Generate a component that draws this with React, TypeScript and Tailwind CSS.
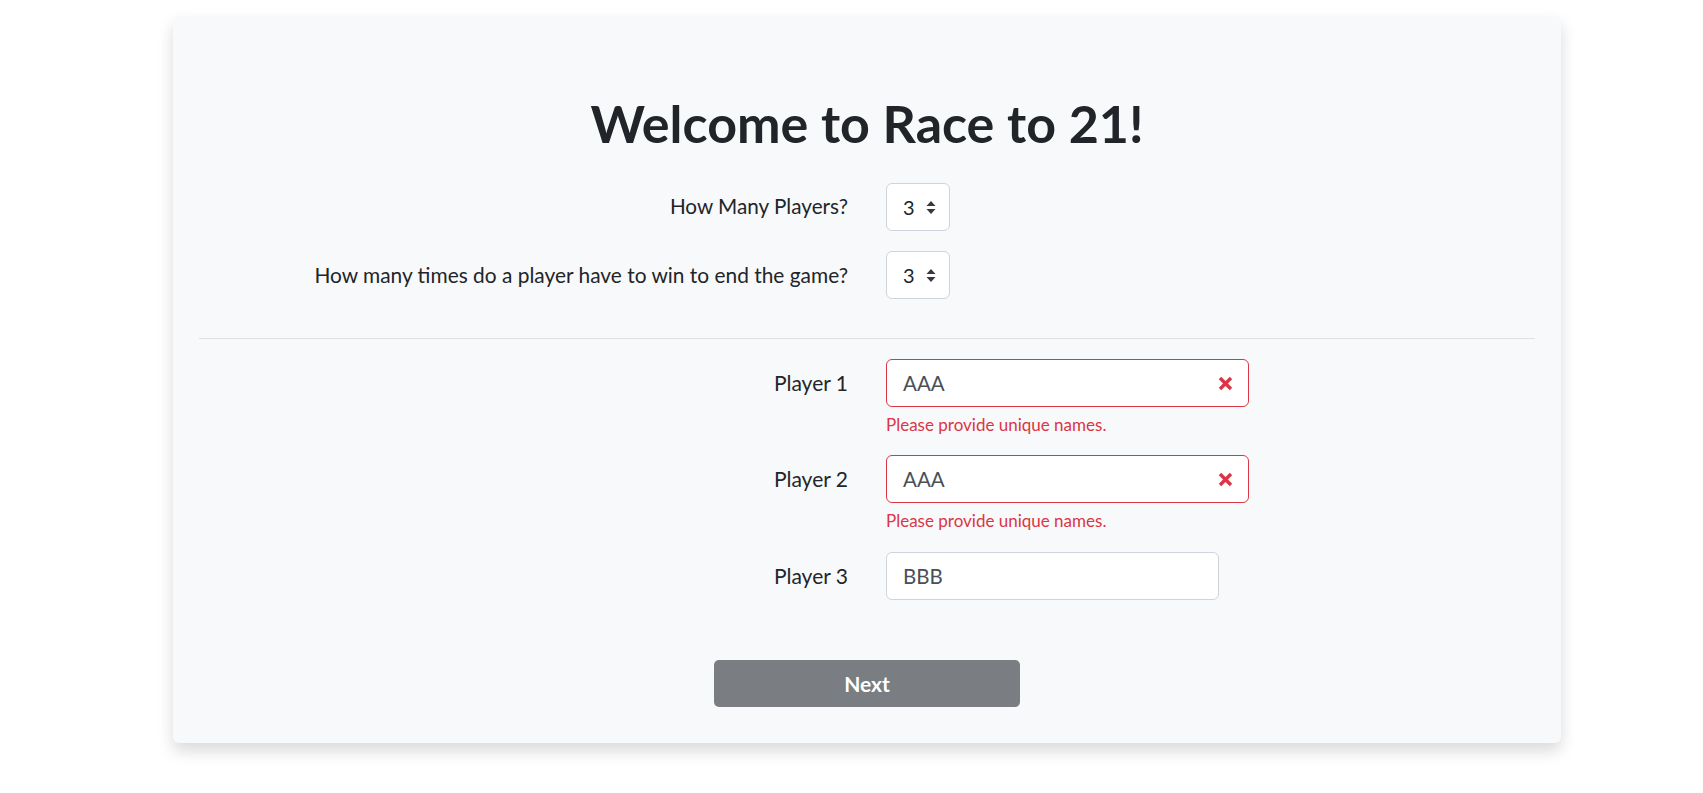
import React from "react";

const font = { fontFamily: "Lato, 'Noto Sans', sans-serif" };

function Arrows() {
  return (
    <svg width="10" height="13" viewBox="0 0 10 13" className="shrink-0">
      <path d="M5 0 L9.5 5 L0.5 5 Z" fill="#343a40" />
      <path d="M5 13 L9.5 8 L0.5 8 Z" fill="#343a40" />
    </svg>
  );
}

function XIcon() {
  return (
    <svg width="15" height="15" viewBox="0 0 15 15">
      <path d="M2 2 L13 13 M13 2 L2 13" stroke="#dc3545" strokeWidth="3.4" strokeLinecap="butt" />
    </svg>
  );
}

function SelectBox() {
  return (
    <div className="flex h-[48px] w-[64px] items-center gap-[11px] rounded-md border border-[#ced4da] bg-white pl-[16px] text-[20px] text-[#212529]">
      <span>3</span>
      <Arrows />
    </div>
  );
}

function PlayerRow({ n, value, invalid, mb }: { n: number; value: string; invalid?: boolean; mb: string }) {
  return (
    <div className={`grid grid-cols-2 gap-x-[38px] ${mb}`}>
      <div className="flex h-[48px] items-center justify-end text-[21px] text-[#212529]">Player {n}</div>
      <div>
        {invalid ? (
          <>
            <div className="flex h-[48px] w-[363px] items-center justify-between rounded-md border border-[#dc3545] bg-white pl-[16px] pr-[15px] text-[20.5px] text-[#495057]">
              <span>{value}</span>
              <XIcon />
            </div>
            <div className="mt-[7px] text-[17px] leading-[21px] text-[#dc3545]">Please provide unique names.</div>
          </>
        ) : (
          <div className="flex h-[48px] w-[333px] items-center rounded-md border border-[#ced4da] bg-white pl-[16px] text-[20.5px] text-[#495057]">
            {value}
          </div>
        )}
      </div>
    </div>
  );
}

export default function App() {
  return (
    <div className="min-h-screen bg-white pl-[173px] pt-[16px]" style={font}>
      <div className="w-[1388px] rounded-md bg-[#f8f9fa] px-[26px] pb-[36px] pt-[76px] shadow-[0_8px_16px_rgba(0,0,0,0.15)]">
        <h1 className="text-center text-[52px] font-bold leading-[62px] text-[#212529]">Welcome to Race to 21!</h1>

        <div className="mt-[29px] grid grid-cols-2 gap-x-[38px]">
          <div className="flex h-[48px] items-center justify-end text-[20.7px] text-[#212529]">How Many Players?</div>
          <div>
            <SelectBox />
          </div>
        </div>
        <div className="mt-[20px] grid grid-cols-2 gap-x-[38px]">
          <div className="flex h-[48px] items-center justify-end text-[20.9px] text-[#212529]">
            How many times do a player have to win to end the game?
          </div>
          <div>
            <SelectBox />
          </div>
        </div>

        <div className="mb-[20px] mt-[39px] h-px bg-[#dee2e6]" />

        <PlayerRow n={1} value="AAA" invalid mb="mb-[20px]" />
        <PlayerRow n={2} value="AAA" invalid mb="mb-[21px]" />
        <PlayerRow n={3} value="BBB" mb="mb-[60px]" />

        <div className="flex justify-center">
          <button className="h-[47px] w-[306px] rounded-[5px] bg-[#7a7e83] text-[21px] font-bold text-white">Next</button>
        </div>
      </div>
    </div>
  );
}
